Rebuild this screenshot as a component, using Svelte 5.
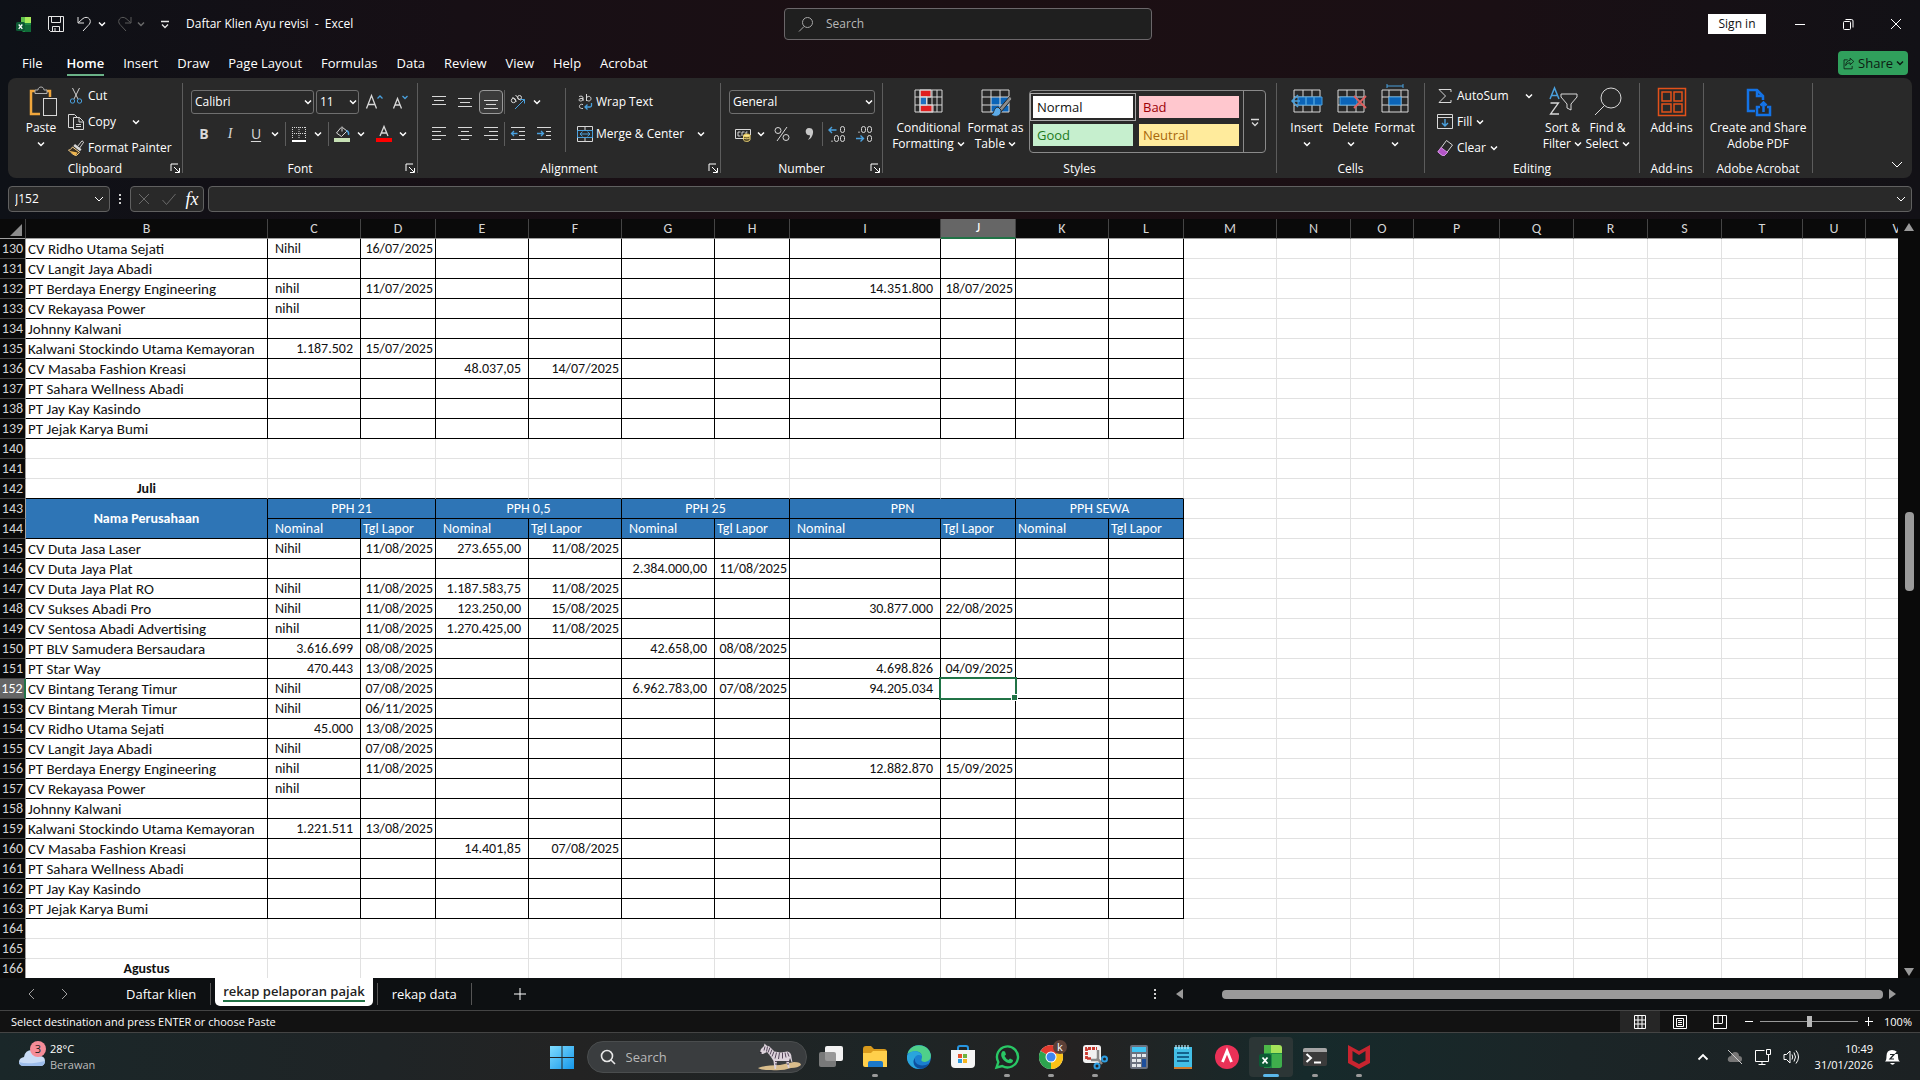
<script>
  const menu = ['File', 'Home', 'Insert', 'Draw', 'Page Layout', 'Formulas', 'Data', 'Review', 'View', 'Help', 'Acrobat'];

  const columns = [
    ['B', 242], ['C', 93], ['D', 75], ['E', 93], ['F', 93], ['G', 93], ['H', 75], ['I', 151], ['J', 75],
    ['K', 93], ['L', 75], ['M', 93], ['N', 74], ['O', 63], ['P', 86], ['Q', 74], ['R', 74], ['S', 74],
    ['T', 81], ['U', 63], ['V', 62]
  ];
  const letters = columns.map((c) => c[0]);
  const tableWidth = columns.reduce((sum, c) => sum + c[1], 26);
  const inner = letters.slice(1, 11);
  const outer = letters.slice(11);

  const cells = {
    130: { B: 'CV Ridho Utama Sejati', C: 'Nihil', D: '16/07/2025' },
    131: { B: 'CV Langit Jaya Abadi' },
    132: { B: 'PT Berdaya Energy Engineering', C: 'nihil', D: '11/07/2025', I: '14.351.800', J: '18/07/2025' },
    133: { B: 'CV Rekayasa Power', C: 'nihil' },
    134: { B: 'Johnny Kalwani' },
    135: { B: 'Kalwani Stockindo Utama Kemayoran', C: '1.187.502', D: '15/07/2025' },
    136: { B: 'CV Masaba Fashion Kreasi', E: '48.037,05', F: '14/07/2025' },
    137: { B: 'PT Sahara Wellness Abadi' },
    138: { B: 'PT Jay Kay Kasindo' },
    139: { B: 'PT Jejak Karya Bumi' },
    142: { B: 'Juli' },
    145: { B: 'CV Duta Jasa Laser', C: 'Nihil', D: '11/08/2025', E: '273.655,00', F: '11/08/2025' },
    146: { B: 'CV Duta Jaya Plat', G: '2.384.000,00', H: '11/08/2025' },
    147: { B: 'CV Duta Jaya Plat RO', C: 'Nihil', D: '11/08/2025', E: '1.187.583,75', F: '11/08/2025' },
    148: { B: 'CV Sukses Abadi Pro', C: 'Nihil', D: '11/08/2025', E: '123.250,00', F: '15/08/2025', I: '30.877.000', J: '22/08/2025' },
    149: { B: 'CV Sentosa Abadi Advertising', C: 'nihil', D: '11/08/2025', E: '1.270.425,00', F: '11/08/2025' },
    150: { B: 'PT BLV Samudera Bersaudara', C: '3.616.699', D: '08/08/2025', G: '42.658,00', H: '08/08/2025' },
    151: { B: 'PT Star Way', C: '470.443', D: '13/08/2025', I: '4.698.826', J: '04/09/2025' },
    152: { B: 'CV Bintang Terang Timur', C: 'Nihil', D: '07/08/2025', G: '6.962.783,00', H: '07/08/2025', I: '94.205.034' },
    153: { B: 'CV Bintang Merah Timur', C: 'Nihil', D: '06/11/2025' },
    154: { B: 'CV Ridho Utama Sejati', C: '45.000', D: '13/08/2025' },
    155: { B: 'CV Langit Jaya Abadi', C: 'Nihil', D: '07/08/2025' },
    156: { B: 'PT Berdaya Energy Engineering', C: 'nihil', D: '11/08/2025', I: '12.882.870', J: '15/09/2025' },
    157: { B: 'CV Rekayasa Power', C: 'nihil' },
    158: { B: 'Johnny Kalwani' },
    159: { B: 'Kalwani Stockindo Utama Kemayoran', C: '1.221.511', D: '13/08/2025' },
    160: { B: 'CV Masaba Fashion Kreasi', E: '14.401,85', F: '07/08/2025' },
    161: { B: 'PT Sahara Wellness Abadi' },
    162: { B: 'PT Jay Kay Kasindo' },
    163: { B: 'PT Jejak Karya Bumi' },
    166: { B: 'Agustus' }
  };
  const rows = Array.from({ length: 37 }, (_, i) => 130 + i);
  const groups = ['PPH 21', 'PPH 0,5', 'PPH 25', 'PPN', 'PPH SEWA'];

  let selected = $state('J152');
  let zoom = $state(100);

  const isBoxed = (row, col) => col <= 'L' && (row <= 139 || (row >= 143 && row <= 163));

  function cellClass(row, col) {
    const list = [];
    const value = cells[row]?.[col] ?? '';
    if (isBoxed(row, col)) list.push('boxed');
    if (row === 142 && col <= 'L') list.push('above');
    if (col === 'B' && (row === 142 || row === 166)) list.push('month');
    else if (col === 'B') list.push('company');
    else if (value.includes('/')) list.push('date');
    else if (/^\d/.test(value)) list.push('number');
    else list.push('word');
    return list.join(' ');
  }

  // inner markup of the small pictures, keyed by command
  const art = {
    excel: '<path d="M5 1h7v7H5z" fill="#5fc24c"/><path d="M9 1h6v6H9z" fill="#a8ea5b"/><path d="M5 7h10v9H7l-2-2z" fill="#1c8a45"/><path d="M9 9h6v7H9z" fill="#0f6a37"/><rect y="6" width="9" height="9" rx="1.5" fill="#0d5a34"/><path d="M2.700 8.500l3.600 4.400M6.300 8.500l-3.600 4.400" stroke="#fff" stroke-width="1.300"/>',
    save: '<path d="M.5.5h15v15h-13l-2-2zM3.500.5v6h9v-6M4.500 15.500v-5h7v5M7 15v-3"/>',
    undo: '<path d="M1 1v6h6M1.300 6.700L6 2.500C10-.5 14.500 3 13 7c-.4 1-1 1.600-1.800 2.400L6 15"/>',
    redo: '<path d="M15 1v6H9M14.700 6.700L10 2.500C6-.5 1.500 3 3 7c.4 1 1 1.600 1.800 2.400L10 15"/>',
    more: '<path d="M4 5.500h8M5 8.500l3 3 3-3" stroke-width="1.300"/>',
    search: '<circle cx="9.500" cy="6.500" r="5"/><path d="M6 10.500L1 15.500"/>',
    min: '<path d="M3 8.500h10"/>',
    restore: '<rect x="3.500" y="5.500" width="7" height="8" rx="1"/><path d="M5.500 3.500h6a1.500 1.500 0 0 1 1.500 1.500v6.500"/>',
    close: '<path d="M3 3l10 10M13 3L3 13"/>',
    share: '<path d="M7 3.500H2.500v11h10V11M10 1.500l4.500 4-4.500 4v-2.300C8 7.200 6 8 4.500 10.500 4.700 6.700 7 4.200 10 4z"/>',
    cut: '<path d="M4.500 0L10 11M11.500 0L6 11" stroke="#d0d0d0"/><circle cx="4.500" cy="13" r="2.200" stroke="#4aa0dd"/><circle cx="11.500" cy="13" r="2.200" stroke="#4aa0dd"/>',
    copy: '<path d="M5 13.500H.5v-13h6L9 3"/><path d="M5.500 3.500h6l4 4v8h-10zM11 3.500V8h4.500M8 10.500h5M8 12.500h5"/>',
    painter: '<path d="M9.500 6.500L14 .8l1.700 1.400-4.200 6" stroke="#d0d0d0"/><path d="M7 4l6.500 5.200-1.500 2L5.300 6z" fill="#d8d8d8" stroke="none"/><path d="M4.500 7l7 5.300L8.500 15.500c-3 0-5.500-3-8-5.500 1.500-.3 3-1 4-3z" fill="#3b3020" stroke="#f6d28f"/><path d="M2 11l7.500 1.500-1.500 3c-2.500-.3-4.300-2.500-6-4.500z" fill="#f0b64e" stroke="none"/>',
    fontUp: '<path d="M.5 14.500L5.500 1.500l5 13M2.500 10.500h6" stroke-width="1.300"/><path d="M11.500 4.500L14 2l2.500 2.500" stroke="#4aa0dd" stroke-width="1.300"/>',
    fontDown: '<path d="M1.500 14.500L5.500 4.500l4 10M3 11h5" stroke-width="1.300"/><path d="M10.500 2L13 4.500 15.500 2" stroke="#4aa0dd" stroke-width="1.300"/>',
    borders: '<path d="M1.500 1v12M1 1.500h14M14.500 1v12M8 1v12M1 7.500h14" stroke-dasharray="1 1"/><path d="M1 15h14" stroke="#fff" stroke-width="2"/>',
    fill: '<path d="M8 .5v5M7 1.500L2.500 7l5 3.500L13 5 8.500 1.500"/><path d="M12.500 4.500c2 1 2.500 2.500 2 4.500" stroke="#4aa0dd" stroke-width="1.400"/><path d="M0 12h16v4H0z" fill="#c6e0b4" stroke="none"/>',
    fontColor: '<path d="M4 10L8 .5 12 10M5.500 7h5" stroke-width="1.300"/><path d="M0 12h16v4H0z" fill="#f00" stroke="none"/>',
    top: '<path d="M1 2.500h14M3 6.500h10M1 10.500h14"/>',
    middle: '<path d="M1 4.500h14M3 8.500h10M1 12.500h14"/>',
    bottom: '<path d="M1 6.500h14M3 10.500h10M1 14.500h14"/>',
    left: '<path d="M1 1.500h14M1 5.500h9M1 9.500h14M1 13.500h9"/>',
    center: '<path d="M1 1.500h14M4 5.500h8M1 9.500h14M4 13.500h8"/>',
    right: '<path d="M1 1.500h14M6 5.500h9M1 9.500h14M6 13.500h9"/>',
    orient: '<circle cx="3.500" cy="6.500" r="2.200"/><path d="M2.500 3l4 4.500M5.500 1l5 5.500"/><circle cx="9.500" cy="3.500" r="2"/><path d="M5 15L14.500 5.500M10.500 5.500h4v4" stroke="#4aa0dd"/>',
    outdent: '<path d="M1 1.500h14M9 5.500h6M9 9.500h6M1 13.500h14"/><path d="M7.500 7.500h-6M4 5L1.500 7.500 4 10" stroke="#4aa0dd" stroke-width="1.300"/>',
    indent: '<path d="M1 1.500h14M10 5.500h5M10 9.500h5M1 13.500h14"/><path d="M1 7.500h6.500M5 5l2.500 2.500L5 10" stroke="#4aa0dd" stroke-width="1.300"/>',
    wrap: '<path d="M2 2.500c3-1 4 0 4 1.500v3M6 4.500c-5-.5-5 2.500-2.500 2.500C5 7 6 6 6 5M9.500 0v7M9.500 4c1-2.500 4.500-2 4.500.7 0 2.600-3.500 3.100-4.500.8M6 10.500c-4-1.500-5.500 4.500 0 4"/><path d="M14.500 9v2.500c0 1-.5 1.500-1.500 1.500H8M10.500 10.500L8 13l2.500 2.500" stroke="#4aa0dd" stroke-width="1.300"/>',
    merge: '<path d="M.5.5h15v15H.5zM8 0v4M8 12v4"/><path d="M.5 4.500h15v7H.5zM3 8h10M5.500 5.700L3 8l2.500 2.300M10.500 5.700L13 8l-2.500 2.300" stroke="#4aa0dd"/>',
    accounting: '<path d="M8 12.500H.5v-9h15V9M5.500 6H3v4h2.500M9.500 6H7v4M12.500 6H11v2"/><path d="M8.500 9.500v4c0 2.500 6.500 2.500 6.500 0v-4" fill="#4a4020" stroke="#f0d77a"/><path d="M8.500 11.700c1 1.500 5.500 1.500 6.500 0" stroke="#f0d77a"/><ellipse cx="11.750" cy="9.500" rx="3.250" ry="1.500" fill="#f6e391" stroke="#e7c75a"/>',
    percent: '<circle cx="4" cy="4.500" r="3"/><circle cx="12" cy="11.500" r="3"/><path d="M13 1L3 15"/>',
    comma: '<path d="M8 2c4.200 0 4.700 3.500 3.700 6.500-.9 2.700-2.200 4.500-4.700 5.500 1.500-2 2.200-3 1.900-4.700C4 10 3 2 8 2z" fill="#c8c8c8" stroke="none"/>',
    moreDec: '<path d="M7.500 4H0M3 1L0 4l3 3" stroke="#4aa0dd" stroke-width="1.400"/><rect x="11.500" y=".5" width="4" height="6" rx="2"/><rect x="5.500" y="9.500" width="4" height="6" rx="2"/><rect x="11.500" y="9.500" width="4" height="6" rx="2"/><path d="M3 16v-1.500"/>',
    lessDec: '<path d="M0 12.500h7.500M4.500 9.500l3 3-3 3" stroke="#4aa0dd" stroke-width="1.400"/><rect x="5.500" y=".5" width="4" height="6" rx="2"/><rect x="11.500" y=".5" width="4" height="6" rx="2"/><rect x="11.500" y="9.500" width="4" height="6" rx="2"/><path d="M3 7V5.500"/>',
    sum: '<path d="M14 4V1.500H2L8.500 8 2 14.500h12V12"/>',
    fillDown: '<path d="M.5.5h15v14H.5zM.5 3.500h15"/><path d="M8 5v7M5 9l3 3 3-3" stroke="#4aa0dd" stroke-width="1.400"/>',
    clear: '<path d="M9.500.5l6 4.500-8 10.500h-2L1 12z" stroke="#d8d8d8"/><path d="M4 7.500l6.500 5-3 3h-2L.8 12z" fill="#b455c8" stroke="#d38ae2"/>',
    tick: '<path d="M1.500 9l4 4.500L14.500 3"/>',
    launcher: '<path d="M1 8V1h7M4 4l5 5M9.500 5v4.500H5"/>',
    normalView: '<path d="M2.500 1.500h11v13h-11zM6 1.500v13M10 1.500v13M2.500 6h11M2.500 10h11"/>',
    pageView: '<path d="M1.500 1.500h13v13h-13zM4.500 4.500h7v8h-7zM6 6.500h4M6 8.500h4M6 10.500h4"/>',
    breakView: '<path d="M1.500 1.500h13v13h-13zM6 2v7M10.500 2v7M1.500 9.500h9"/>'
  };

  // 30px drawings of the tall ribbon buttons
  const bigArt = {
    paste: '<path d="M14 27H5V4h4M20 4h4v6" stroke="#f0a63c" stroke-width="2.500"/><path d="M9 6.500V3h3c0-4 6-4 6 0h3v3.500z" fill="#292929" stroke="#b0b0b0"/><rect x="17.500" y="11.500" width="13" height="17" fill="#292929" stroke="#d8d8d8"/>',
    conditional: '<path d="M6 3h11v7H6zM6 18h13v7H6z" fill="#e02020"/><path d="M6 10h7v8H6z" fill="#1e70bf"/><path d="M1 3h27v22H1zM6 3v22M12.500 10v8M18 3v22M23 3v22M1 10h27M1 18h27"/>',
    table: '<path d="M10 10h18v15H10z" fill="#0b64b8" stroke="none"/><path d="M1 3h27v22H1zM10 3v22M19 3v22M1 10h27M1 18h27"/><path d="M29 9L18 22l2 3 11-13z" fill="#8c8c8c" stroke="#292929"/><path d="M17 20c-5 1-3 6-7 8 5 3 11 1 10-5z" fill="#5cabe8" stroke="#292929"/>',
    insert: '<path d="M2 3h26v22H2zM2 10h26M2 18h26M11 3v22M20 3v22"/><path d="M6 10h24v8H6z" fill="#0b64b8" stroke="#4aa0dd"/><path d="M8 14H1M6 8l-6 6 6 6M14 10v8M22 10v8" stroke="#4aa0dd" stroke-width="1.500"/>',
    delete: '<path d="M2 3h26v22H2zM2 10h26M2 18h26M11 3v22M20 3v22"/><path d="M4 10h17v8H4z" fill="#0b64b8" stroke="#4aa0dd"/><path d="M18 9l12 12M30 9L18 21" stroke="#e06060" stroke-width="1.800"/>',
    format: '<path d="M2 3h26v22H2zM2 10h26M2 18h26M9 3v22M21 3v22"/><path d="M9 10h12v8H9z" fill="#0b64b8" stroke="#4aa0dd"/><path d="M7-1h16M7-3v4M23-3v4" stroke="#4aa0dd"/>',
    sort: '<path d="M2 12L6.500 1l4.500 11M3.500 8.500h6" stroke="#4aa0dd" stroke-width="1.500"/><path d="M2.500 16h8l-8 11h8.500" stroke-width="1.300"/><path d="M13 7h16v3l-6 7v6l-4-2v-4l-6-7z"/>',
    find: '<circle cx="18" cy="11" r="10"/><path d="M11.500 18.500L2 28"/>',
    addins: '<path d="M1.500 1.500h27v27h-27zM5 5h9v9H5zM17 5h8v9h-8zM5 17h9v8H5zM17 17h8v8h-8z" stroke="#e2511a" stroke-width="1.500"/>',
    pdf: '<path d="M12 24H5V3h9l6 6v4M14 3v6h6" stroke="#1473e6" stroke-width="2.500"/><path d="M17 20h-3v8h13v-8h-3M20.500 25v-9M17.500 18.500l3-3 3 3" stroke="#1473e6" stroke-width="2.500"/>'
  };

  // taskbar pictures on a 24px canvas
  const apps = [
    { name: 'Task view', svg: '<rect x="6" y="1" width="18" height="15" rx="2" fill="#f2f2f2"/><rect x="0" y="7" width="17" height="15" rx="2" fill="#888" fill-opacity=".85"/>' },
    { name: 'File Explorer', run: true, svg: '<path d="M0 4q0-3 3-3h5l3 3h10q3 0 3 3v4H0z" fill="#d99a1c"/><path d="M0 8l8 0 2-2h14v16H2q-2 0-2-2z" fill="#ffcf4b"/><path d="M5 22v-4q0-2 2-2h11q2 0 2 2v4z" fill="#1c78c8"/>' },
    { name: 'Microsoft Edge', svg: '<circle cx="12" cy="12" r="12" fill="#1b7fd0"/><path d="M.5 9C3-2 20-3 23.700 9c1.300 6-4 9-8.200 7.500-2-1-.5-2.500-.5-5C15 6 6 4.500.5 9z" fill="#4fd08a"/><path d="M0 11c4-7 13-5.500 15 0-4-2.500-8 0-7.500 4.500.5 4 4 7 8 7.500C7 26-1 19 0 11z" fill="#2aa5dc"/><path d="M8 13c-1.500 6 6 10 14.500 5.500-3 4.500-8 6.500-12 4.500-4.500-2-5-8-2.500-10z" fill="#0d4f9e"/>' },
    { name: 'Microsoft Store', svg: '<path d="M7 7V3q0-2 2-2h6q2 0 2 2v4" fill="none" stroke="#2795e0" stroke-width="2"/><path d="M0 5h24v14q0 4-4 4H4q-4 0-4-4z" fill="#f5f5f5"/><path d="M7 9h4v4H7z" fill="#e8502a"/><path d="M12 9h4v4h-4z" fill="#6db33f"/><path d="M7 14h4v4H7z" fill="#2a9be0"/><path d="M12 14h4v4h-4z" fill="#f5b51e"/>' },
    { name: 'WhatsApp', run: true, svg: '<path d="M1.500 22.500l1.800-5.500A10.500 10.500 0 1 1 7.200 21z" fill="none" stroke="#29c765" stroke-width="2.400"/><path d="M8 6l2 .5 1 3-1.500 1.500q1.500 3 4 4L15 13.500l3 1.500c0 5-6 3.500-9 .5S5 8 8 6z" fill="#29c765"/>' },
    { name: 'Google Chrome', run: true, svg: '<circle cx="12" cy="12" r="12" fill="#fff"/><path d="M12 12L1.600 6A12 12 0 0 1 22.400 6z" fill="#e33b2e"/><path d="M12 12l10.400-6A12 12 0 0 1 12 24z" fill="#fbc116"/><path d="M12 12l0 12A12 12 0 0 1 1.600 6z" fill="#2da44e"/><circle cx="12" cy="12" r="5.500" fill="#fff"/><circle cx="12" cy="12" r="4.500" fill="#3f85ee"/><circle cx="21" cy="2" r="7" fill="#5d4037"/><text x="21" y="6" fill="#fff" font-size="11" text-anchor="middle">k</text>' },
    { name: 'Snipping Tool', run: true, svg: '<rect x="0" y="0" width="18" height="18" rx="3" fill="#f1f1f1"/><path d="M3.500 14V3.500H14" fill="none" stroke="#c8372d" stroke-width="2.800" stroke-dasharray="3 1"/><path d="M4 13.500h4" stroke="#c8372d" stroke-width="2.500"/><path d="M15 5v10l-7 0M14 13l5 6" fill="none" stroke="#888" stroke-width="2.500"/><circle cx="21.500" cy="14" r="2.500" fill="none" stroke="#2e9ee2" stroke-width="2"/><circle cx="14" cy="21" r="2.500" fill="none" stroke="#2e9ee2" stroke-width="2"/>' },
    { name: 'Calculator', svg: '<rect x="3" y="0" width="18" height="24" rx="2" fill="#6b7280"/><path d="M5 2h14v5H5z" fill="#40c4f2"/><path d="M5 9h4v3H5zM10 9h4v3h-4zM15 9h4v3h-4zM5 14h4v3H5zM10 14h4v3h-4zM5 19h4v3H5zM10 19h4v3h-4z" fill="#e4e8ec"/><path d="M15 14h4v8h-4z" fill="#1e4f9c"/>' },
    { name: 'Notepad', svg: '<path d="M3 21h18v3H3z" fill="#d07a2c"/><path d="M3 2h18v20H3z" fill="#43bfe6"/><path d="M5 0v4M8 0v4M11 0v4M14 0v4M17 0v4" stroke="#bfefff" stroke-width="1.200"/><path d="M6 8h12M6 12h12M6 16h12" stroke="#14628c" stroke-width="1.800"/>' },
    { name: 'Accurate', svg: '<circle cx="12" cy="12" r="12" fill="#ea3157"/><path d="M7.500 17L12 6l4.500 11" fill="none" stroke="#fff" stroke-width="2.800"/>' },
    { name: 'Excel', run: true, active: true, svg: '<path d="M5 0h10v12H5z" fill="#4db848"/><path d="M12 0h8q3 0 3 3v9H12z" fill="#a5e35a"/><path d="M5 8h18v12q0 3-3 3H5z" fill="#1f8b46"/><path d="M13 9h10v11q0 3-3 3h-7z" fill="#3fae4c"/><rect x="0" y="9" width="12" height="13" rx="2" fill="#0c5a34"/><path d="M3.500 12.500l5 6M8.500 12.500l-5 6" stroke="#fff" stroke-width="1.800"/>' },
    { name: 'Terminal', run: true, svg: '<rect x="0" y="3" width="24" height="18" rx="2" fill="#3b3b3b"/><path d="M0 5q0-2 2-2h20q2 0 2 2v2H0z" fill="#a5a5a5"/><path d="M3.500 9l4.500 4-4.500 4M11 17.500h7" fill="none" stroke="#fff" stroke-width="2"/>' },
    { name: 'McAfee', run: true, svg: '<path d="M1 0l11 6 11-6v18l-11 6L1 18zM5.500 6v9.500l6.500 3.500 6.500-3.500V6L12 10z" fill="#c8242f" fill-rule="evenodd"/>' }
  ];

  const styleCells = ['Normal', 'Bad', 'Good', 'Neutral'];
</script>

{#snippet icon(name)}
  <svg class="icon" viewBox="0 0 16 16" width="16" height="16" aria-hidden="true">{@html art[name]}</svg>
{/snippet}

{#snippet big(name)}
  <svg class="big-icon" viewBox="0 0 30 30" width="30" height="30" aria-hidden="true">{@html bigArt[name]}</svg>
{/snippet}

{#snippet chev()}
  <svg class="chev" viewBox="0 0 8 8" width="8" height="8" aria-hidden="true"><path d="M1 2.500l3 3 3-3" /></svg>
{/snippet}

{#snippet tool(name, label)}
  <button class="tool" aria-label={label}>{@render icon(name)}</button>
{/snippet}

{#snippet drop(label)}
  <button class="drop" aria-label={label}>{@render chev()}</button>
{/snippet}

{#snippet footer(label, launcher)}
  <div class="group-foot">
    <span>{label}</span>
    {#if launcher}
      <button class="launcher" aria-label="{label} settings">
        <svg viewBox="0 0 10 10" width="10" height="10">{@html art.launcher}</svg>
      </button>
    {/if}
  </div>
{/snippet}

<div class="app">
  <header class="titlebar">
    <div class="quick">
      {@render icon('excel')}
      <button aria-label="Save">{@render icon('save')}</button>
      <button class="pair" aria-label="Undo">{@render icon('undo')}{@render chev()}</button>
      <button class="pair dim" aria-label="Redo">{@render icon('redo')}{@render chev()}</button>
      <button aria-label="Customize quick access">{@render icon('more')}</button>
      <span class="doc">Daftar Klien Ayu revisi &nbsp;-&nbsp; Excel</span>
    </div>
    <label class="search">
      {@render icon('search')}
      <input type="search" placeholder="Search" aria-label="Search" />
    </label>
    <div class="window">
      <button class="signin">Sign in</button>
      <button class="win" aria-label="Minimize">{@render icon('min')}</button>
      <button class="win" aria-label="Restore">{@render icon('restore')}</button>
      <button class="win" aria-label="Close">{@render icon('close')}</button>
    </div>
  </header>

  <nav class="menu">
    {#each menu as item}
      <button class:current={item === 'Home'}>{item}</button>
    {/each}
    <button class="share">{@render icon('share')}Share{@render chev()}</button>
  </nav>

  <section class="ribbon">
    <div class="group clipboard">
      <div class="tools">
        <button class="tall">{@render big('paste')}<span>Paste</span>{@render chev()}</button>
        <div class="stack">
          <button class="row">{@render icon('cut')}Cut</button>
          <button class="row copy">{@render icon('copy')}Copy{@render chev()}</button>
          <button class="row">{@render icon('painter')}Format Painter</button>
        </div>
      </div>
      {@render footer('Clipboard', true)}
    </div>

    <div class="group font">
      <div class="lines">
        <div class="line boxes">
          <span class="select"><select aria-label="Font"><option>Calibri</option></select>{@render chev()}</span>
          <span class="select size"><select aria-label="Font size"><option>11</option></select>{@render chev()}</span>
          {@render tool('fontUp', 'Increase font size')}
          {@render tool('fontDown', 'Decrease font size')}
        </div>
        <div class="line marks">
          <button class="tool bold">B</button>
          <button class="tool italic">I</button>
          <button class="tool under">U</button>
          {@render drop('Underline style')}
          <i class="bar"></i>
          {@render tool('borders', 'Borders')}
          {@render drop('Border style')}
          <i class="bar"></i>
          {@render tool('fill', 'Fill color')}
          {@render drop('Pick fill color')}
          {@render tool('fontColor', 'Font color')}
          {@render drop('Pick font color')}
        </div>
      </div>
      {@render footer('Font', true)}
    </div>

    <div class="group alignment">
      <div class="tools">
        <div class="lines">
          <div class="line">
            {@render tool('top', 'Top align')}
            {@render tool('middle', 'Middle align')}
            <button class="tool pressed" aria-label="Bottom align">{@render icon('bottom')}</button>
            <i class="bar"></i>
            {@render tool('orient', 'Orientation')}
            {@render drop('Orientation options')}
          </div>
          <div class="line">
            {@render tool('left', 'Align left')}
            {@render tool('center', 'Center')}
            {@render tool('right', 'Align right')}
            <i class="bar"></i>
            {@render tool('outdent', 'Decrease indent')}
            {@render tool('indent', 'Increase indent')}
          </div>
        </div>
        <i class="bar long"></i>
        <div class="lines">
          <button class="row">{@render icon('wrap')}Wrap Text</button>
          <button class="row merge">{@render icon('merge')}Merge &amp; Center{@render chev()}</button>
        </div>
      </div>
      {@render footer('Alignment', true)}
    </div>

    <div class="group numbers">
      <div class="lines">
        <span class="select"><select aria-label="Number format"><option>General</option></select>{@render chev()}</span>
        <div class="line">
          {@render tool('accounting', 'Accounting format')}
          {@render drop('Currency')}
          {@render tool('percent', 'Percent style')}
          {@render tool('comma', 'Comma style')}
          <i class="bar"></i>
          {@render tool('moreDec', 'Increase decimal')}
          {@render tool('lessDec', 'Decrease decimal')}
        </div>
      </div>
      {@render footer('Number', true)}
    </div>

    <div class="group styles">
      <div class="tools">
        <button class="tall">{@render big('conditional')}<span>Conditional<br />Formatting {@render chev()}</span></button>
        <button class="tall">{@render big('table')}<span>Format as<br />Table {@render chev()}</span></button>
        <div class="gallery">
          <div class="swatches">
            {#each styleCells as name}
              <button class={name.toLowerCase()}>{name}</button>
            {/each}
          </div>
          <button class="gallery-more" aria-label="More styles">{@render icon('more')}</button>
        </div>
      </div>
      {@render footer('Styles', false)}
    </div>

    <div class="group sheetcells">
      <div class="tools">
        <button class="tall">{@render big('insert')}<span>Insert</span>{@render chev()}</button>
        <button class="tall">{@render big('delete')}<span>Delete</span>{@render chev()}</button>
        <button class="tall">{@render big('format')}<span>Format</span>{@render chev()}</button>
      </div>
      {@render footer('Cells', false)}
    </div>

    <div class="group editing">
      <div class="tools">
        <div class="stack">
          <button class="row copy">{@render icon('sum')}AutoSum{@render chev()}</button>
          <button class="row">{@render icon('fillDown')}Fill{@render chev()}</button>
          <button class="row">{@render icon('clear')}Clear{@render chev()}</button>
        </div>
        <button class="tall">{@render big('sort')}<span>Sort &amp;<br />Filter {@render chev()}</span></button>
        <button class="tall">{@render big('find')}<span>Find &amp;<br />Select {@render chev()}</span></button>
      </div>
      {@render footer('Editing', false)}
    </div>

    <div class="group addins">
      <div class="tools">
        <button class="tall">{@render big('addins')}<span>Add-ins</span></button>
      </div>
      {@render footer('Add-ins', false)}
    </div>

    <div class="group acrobat">
      <div class="tools">
        <button class="tall">{@render big('pdf')}<span>Create and Share<br />Adobe PDF</span></button>
      </div>
      {@render footer('Adobe Acrobat', false)}
    </div>

    <button class="collapse" aria-label="Collapse ribbon">
      <svg viewBox="0 0 12 12" width="12" height="12"><path d="M1 4l5 5 5-5" /></svg>
    </button>
  </section>

  <section class="formula">
    <div class="namebox">
      <input aria-label="Name box" bind:value={selected} />
      <svg viewBox="0 0 12 12" width="12" height="12"><path d="M2 4l4 4 4-4" /></svg>
    </div>
    <span class="dots"></span>
    <div class="fx">
      <button class="dim" aria-label="Cancel">{@render icon('close')}</button>
      <button class="dim" aria-label="Enter">{@render icon('tick')}</button>
      <button class="fn" aria-label="Insert function">fx</button>
    </div>
    <div class="entry">
      <input aria-label="Formula bar" />
      <svg viewBox="0 0 12 12" width="12" height="12"><path d="M2 4l4 4 4-4" /></svg>
    </div>
  </section>

  <main class="sheet">
    <div class="viewport">
      <table style="width: {tableWidth}px">
        <colgroup>
          <col class="index" />
          {#each columns as [, width]}
            <col style="width: {width}px" />
          {/each}
        </colgroup>
        <thead>
          <tr>
            <th class="corner" aria-label="Select all">
              <svg viewBox="0 0 12 12" width="12" height="12"><path d="M12 0v12H0z" /></svg>
            </th>
            {#each letters as letter}
              <th class:picked={letter === 'J'}>{letter}</th>
            {/each}
          </tr>
        </thead>
        <tbody>
          {#each rows as row}
            <tr>
              <th class:picked={row === 152}>{row}</th>
              {#if row === 143}
                <td class="banner name" rowspan="2">Nama Perusahaan</td>
                {#each groups as group}
                  <td class="banner mid" colspan="2">{group}</td>
                {/each}
                {#each outer as col}<td></td>{/each}
              {:else if row === 144}
                {#each inner as col, i}
                  <td class="banner" class:inset={i % 2 === 0 && col !== 'K'}>{i % 2 ? 'Tgl Lapor' : 'Nominal'}</td>
                {/each}
                {#each outer as col}<td></td>{/each}
              {:else}
                {#each letters as col}
                  <td class={cellClass(row, col)}>
                    {cells[row]?.[col] ?? ''}
                    {#if row === 152 && col === 'J'}<span class="cursor"></span>{/if}
                  </td>
                {/each}
              {/if}
            </tr>
          {/each}
        </tbody>
      </table>
    </div>
    <div class="vscroll">
      <svg viewBox="0 0 10 8" width="10" height="8"><path d="M5 0l5 8H0z" /></svg>
      <span class="track"><span class="thumb"></span></span>
      <svg viewBox="0 0 10 8" width="10" height="8"><path d="M5 8l5-8H0z" /></svg>
    </div>
  </main>

  <section class="tabs">
    <button class="arrow" aria-label="Previous sheet"><svg viewBox="0 0 12 12" width="12" height="12"><path d="M8 1L3 6l5 5" /></svg></button>
    <button class="arrow" aria-label="Next sheet"><svg viewBox="0 0 12 12" width="12" height="12"><path d="M4 1l5 5-5 5" /></svg></button>
    <button class="tab first">Daftar klien</button>
    <button class="tab open"><span>rekap pelaporan pajak</span></button>
    <button class="tab last">rekap data</button>
    <button class="add" aria-label="New sheet"><svg viewBox="0 0 12 12" width="12" height="12"><path d="M6 0v12M0 6h12" /></svg></button>
    <div class="hscroll">
      <span class="dots"></span>
      <svg viewBox="0 0 8 10" width="8" height="10"><path d="M0 5l7-5v10z" /></svg>
      <span class="track"><span class="thumb"></span></span>
      <svg viewBox="0 0 8 10" width="8" height="10"><path d="M8 5L1 0v10z" /></svg>
    </div>
  </section>

  <footer class="status">
    <span>Select destination and press ENTER or choose Paste</span>
    <div class="views">
      <button class="on" aria-label="Normal">{@render icon('normalView')}</button>
      <button aria-label="Page layout">{@render icon('pageView')}</button>
      <button aria-label="Page break preview">{@render icon('breakView')}</button>
      <button class="step" aria-label="Zoom out"><svg viewBox="0 0 10 10" width="10" height="10"><path d="M1 4.500h8" /></svg></button>
      <input type="range" min="0" max="200" aria-label="Zoom" bind:value={zoom} />
      <button class="step" aria-label="Zoom in"><svg viewBox="0 0 10 10" width="10" height="10"><path d="M1 4.500h8M4.500 0v9" /></svg></button>
      <span class="percent">{zoom}%</span>
    </div>
  </footer>

  <div class="taskbar">
    <div class="weather">
      <svg viewBox="0 0 28 28" width="28" height="28">
        <path d="M6 25q-5 0-5-4 0-4 5-5 1-7 8-7 6 0 7 6 6 0 6 5 0 5-5 5z" fill="#c9dcf6" />
        <path d="M6 25q-5 0-5-4 9 3 26-1 0 5-5 5z" fill="#9dbdeb" />
        <circle cx="20" cy="8" r="8" fill="#f58c98" />
        <text x="20" y="12" text-anchor="middle" font-size="11" fill="#222">3</text>
      </svg>
      <p>28°C<br /><span>Berawan</span></p>
    </div>
    <div class="dock">
      <button class="app-btn" aria-label="Start">
        <svg viewBox="0 0 24 24" width="24" height="24">
          <defs>
            <linearGradient id="win" x1="0" y1="0" x2="1" y2="1"><stop offset="0" stop-color="#7fdcff" /><stop offset="1" stop-color="#1597ea" /></linearGradient>
          </defs>
          <path d="M0 1h11.500v11H0zM12.500 1H24v11H12.500zM0 13h11.500v11H0zM12.500 13H24v11H12.500z" fill="url(#win)" />
        </svg>
      </button>
      <label class="find">
        <svg class="glass" viewBox="0 0 16 16" width="16" height="16"><circle cx="7" cy="7" r="5.500" /><path d="M11 11l4 4" /></svg>
        <input type="search" placeholder="Search" aria-label="Search Windows" />
        <svg class="zebra" viewBox="0 0 46 28" width="46" height="28">
          <path d="M2 25q8-3 22-3l14-3q7 0 7 3-3 3-10 3-8 3-20 2-11 0-13-2z" fill="#d9bd8c" />
          <path d="M4 9l1-3 3-3 .5-2.500 2 2 3 1 5 5 6 1 7-1q4 1 4 6l1 5-1-.5-1.500-4-1 3 .5 7h-1.500l-2-7h-9l-1 8h-1.500l-1-8-2.500-4-4-5-4 2q-3 .5-3-2z" fill="#ddd3dc" />
          <path d="M9 3.500l-1 4M11.500 3.500l-1 5M14 4.500l-2 5M16 6.500l-2 5M18 8.500l-2 5M20.500 9.500l-1.500 6M23.500 9.500l-1 6.500M26.500 9.500v6M29 9.500l1 5M31.500 9.500l1.500 4M19 18.500h2M19 21h2M30 18.500h3M31 21h2" stroke="#54465a" />
          <path d="M4 9l1.500 1.500" stroke="#2b2430" stroke-width="1.500" />
        </svg>
      </label>
      {#each apps as item}
        <button class="app-btn" class:active={item.active} class:run={item.run} aria-label={item.name}>
          <svg viewBox="0 0 24 24" width="24" height="24">{@html item.svg}</svg>
        </button>
      {/each}
    </div>
    <div class="tray">
      <svg class="up" viewBox="0 0 16 16" width="16" height="16"><path d="M3.500 10.500L8 6l4.500 4.500" stroke-width="1.800" /></svg>
      <svg viewBox="0 0 16 16" width="16" height="16"><path d="M3 13q-3-1-2-4 1-2 3-2 1-4 4-4 4 0 4 4 3 0 3 3t-3 3z" fill="#777" stroke="none" /><path d="M1 1l14 14" stroke="#ccc" /></svg>
      <svg viewBox="0 0 16 16" width="16" height="16"><path d="M9.500 1.500h-9v11h13V9M3.500 15.500h7M7 12.500v3M11.500.5h4v5h-4zM13.500 6v4" /></svg>
      <svg viewBox="0 0 16 16" width="16" height="16"><path d="M1 5.500h2.500L7 2v12l-3.500-3.500H1zM9 5.500q1.500 2.500 0 5M11 3.500q3 4.500 0 9M13 1.500q5 6.500 0 13" /></svg>
      <p>10:49<br />31/01/2026</p>
      <svg viewBox="0 0 16 16" width="16" height="16"><path d="M0 12.500q1.500-1 1.500-5.500 0-6 5.500-6 6 0 6 6 0 4.500 2 5.500zM5 14h5q-2.500 3.500-5 0z" fill="#fff" stroke="none" /><path d="M5 5.500h4L5 10h4M11 .5h4l-4 4h4" stroke="#1c2326" stroke-width="1.200" /></svg>
    </div>
  </div>
</div>

<style>
  :global(body) {
    margin: 0;
    background: #111;
  }

  .app {
    display: flex;
    flex-direction: column;
    height: 100vh;
    overflow: hidden;
    color: #fff;
    font: 12px/16px 'Segoe UI', 'Open Sans', sans-serif;
    background: linear-gradient(90deg, #0e1117 0, #170f15 24%, #1c0f13 50%, #1a0f14 78%, #121116 100%);
  }

  button {
    display: inline-flex;
    align-items: center;
    justify-content: center;
    padding: 0;
    border: 0;
    background: none;
    color: inherit;
    font: inherit;
    white-space: nowrap;
  }

  input,
  select {
    box-sizing: border-box;
    min-width: 0;
    padding: 0;
    border: 0;
    outline: 0;
    background: none;
    color: inherit;
    font: inherit;
    appearance: none;
  }

  svg {
    display: block;
    flex: none;
    overflow: visible;
    fill: none;
    stroke: currentColor;
  }

  .icon {
    color: #d8d8d8;
  }

  .chev {
    stroke-width: 1.5;
  }

  .dim,
  .dim .icon {
    color: #6a6a6a;
  }

  /* title bar */
  .titlebar {
    display: grid;
    grid-template-columns: 1fr 368px 1fr;
    align-items: start;
    height: 48px;
    padding-left: 16px;
  }

  .quick {
    display: flex;
    align-items: center;
    height: 48px;
    gap: 13px;
  }

  .quick > .icon {
    margin-right: 3px;
    stroke: none;
  }

  .quick button .icon {
    color: #e6e6e6;
  }

  .quick .dim .icon {
    color: #5a5a5a;
  }

  .pair {
    gap: 5px;
    width: 28px;
  }

  .pair + .pair {
    margin-left: -2px;
  }

  .doc {
    white-space: nowrap;
  }

  .search {
    display: flex;
    align-items: center;
    gap: 12px;
    height: 30px;
    margin-top: 8px;
    padding: 0 13px;
    border: 1px solid #6b676a;
    border-radius: 4px;
    background: #1f1f1f;
  }

  .search .icon {
    color: #a8a8a8;
  }

  .search input {
    flex: 1;
  }

  input::placeholder {
    color: #b8b8b8;
    opacity: 1;
  }

  .window {
    display: flex;
    justify-content: flex-end;
    align-items: center;
    height: 48px;
  }

  .signin {
    width: 58px;
    height: 20px;
    margin-right: 10px;
    background: #fff;
    color: #111;
  }

  .win {
    width: 48px;
    height: 32px;
  }

  .win .icon {
    color: #fff;
  }

  /* menu */
  .menu {
    display: flex;
    align-items: center;
    height: 30px;
    padding: 0 12px 0 13px;
    font-size: 13px;
  }

  .menu button {
    height: 26px;
    padding: 0 10px 0 9px;
  }

  .menu button:first-child {
    margin-right: 5px;
  }

  .menu .current {
    font-weight: 600;
    box-shadow: inset 0 -2px #6ab187;
    padding: 0;
    margin: 0 10px 0 9px;
  }

  .menu .share {
    gap: 3px;
    height: 24px;
    margin-left: auto;
    padding: 0 4px;
    border-radius: 4px;
    background: #30a05c;
    color: #0c1a12;
  }

  .share .icon {
    width: 13px;
    height: 13px;
    color: #0c1a12;
  }

  /* ribbon */
  .ribbon {
    display: flex;
    flex: none;
    height: 100px;
    margin: 0 8px;
    border-radius: 8px;
    background: #292929;
  }

  .group {
    display: flex;
    flex-direction: column;
    justify-content: space-between;
    box-sizing: border-box;
    height: 90px;
    margin: 5px 0;
    border-right: 1px solid #5c5c5c;
  }

  .tools {
    display: flex;
    height: 78px;
  }

  .group-foot {
    position: relative;
    height: 16px;
    margin-bottom: -4px;
    text-align: center;
  }

  .launcher {
    position: absolute;
    right: 2px;
    top: 2px;
  }

  .stack {
    display: flex;
    flex-direction: column;
    align-items: flex-start;
  }

  .row {
    height: 26px;
    gap: 4px;
  }

  .copy .chev {
    margin-left: 12px;
  }

  .tall {
    flex-direction: column;
    justify-content: flex-start;
    padding-top: 4px;
  }

  .tall span {
    margin: 3px 0 4px;
  }

  .tall span .chev {
    display: inline-block;
  }

  .big-icon {
    color: #d8d8d8;
  }

  .lines {
    display: flex;
    flex-direction: column;
    align-items: flex-start;
    gap: 8px;
    padding-top: 7px;
  }

  .line {
    display: flex;
    align-items: center;
    height: 24px;
  }

  .lines .row {
    height: 24px;
    gap: 3px;
  }

  .tool {
    width: 26px;
    height: 24px;
  }

  .drop {
    width: 12px;
    height: 24px;
  }

  .bar {
    width: 1px;
    height: 24px;
    background: #5c5c5c;
  }

  .bar.long {
    height: 64px;
    margin: 5px 11px 0 8px;
  }

  .pressed {
    width: 24px;
    margin: 0 1px;
    box-sizing: border-box;
    border: 1px solid #9a9a9a;
    border-radius: 4px;
    background: #3b3b3b;
  }

  .select {
    position: relative;
    display: block;
    height: 24px;
  }

  .select select {
    width: 100%;
    height: 24px;
    padding: 0 3px;
    border: 1px solid #6f6f6f;
    border-radius: 3px;
  }

  .select .chev {
    position: absolute;
    right: 2px;
    top: 8px;
  }

  .clipboard {
    width: 175px;
  }

  .clipboard .tall {
    width: 38px;
    margin: 0 8px 0 14px;
  }

  .font {
    width: 235px;
  }

  .font .lines,
  .numbers .lines {
    padding-left: 8px;
  }

  .font .select {
    width: 123px;
    margin-right: 2px;
  }

  .font .select.size {
    width: 43px;
  }

  .marks .tool {
    color: #d8d8d8;
    font-size: 14px;
  }

  .marks .drop {
    margin-right: 4px;
  }

  .marks .bold {
    font-weight: 700;
  }

  .marks .italic {
    font-family: 'Liberation Serif', serif;
    font-style: italic;
  }

  .marks .under {
    text-decoration: underline;
    text-underline-offset: 2px;
  }

  .alignment {
    width: 303px;
  }

  .alignment .tools > .lines:first-child {
    padding-left: 8px;
  }

  .merge .chev {
    margin-left: 10px;
  }

  .numbers {
    width: 162px;
  }

  .numbers .select {
    width: 146px;
  }

  .numbers .tool {
    width: 27px;
  }

  .numbers .drop {
    width: 10px;
    margin-right: 2px;
  }

  .styles {
    width: 394px;
  }

  .styles .tall {
    width: 67px;
  }

  .styles .tall:first-child {
    margin-left: 12px;
  }

  .gallery {
    display: flex;
    box-sizing: border-box;
    width: 237px;
    height: 63px;
    margin-top: 7px;
    border: 1px solid #8a8a8a;
    border-radius: 4px;
  }

  .swatches {
    display: grid;
    grid-template-columns: 100px 100px;
    grid-auto-rows: 22px;
    gap: 6px;
    padding: 5px 4px 5px 3px;
    font-size: 13px;
  }

  .swatches button {
    justify-content: flex-start;
    padding-left: 4px;
  }

  .swatches .normal {
    background: #fff;
    color: #111;
    outline: 1px solid #aaa;
    outline-offset: 2px;
  }

  .swatches .bad {
    background: #ffc7ce;
    color: #9c0006;
  }

  .swatches .good {
    background: #c6efce;
    color: #1d7a1d;
  }

  .swatches .neutral {
    background: #ffeb9c;
    color: #a8670b;
  }

  .gallery-more {
    flex: 1;
    border-left: 1px solid #8a8a8a;
  }

  .sheetcells {
    width: 148px;
  }

  .sheetcells .tools {
    justify-content: center;
  }

  .sheetcells .tall {
    width: 44px;
  }

  .editing {
    width: 215px;
  }

  .editing .tools {
    padding-left: 12px;
  }

  .editing .stack {
    width: 103px;
  }

  .editing .tall {
    width: 45px;
  }

  .addins {
    width: 64px;
  }

  .acrobat {
    width: 109px;
  }

  .addins .tools,
  .acrobat .tools {
    justify-content: center;
  }

  .collapse {
    align-self: flex-end;
    margin: 0 9px 8px auto;
  }

  /* formula bar */
  .formula {
    display: flex;
    align-items: center;
    flex: none;
    height: 41px;
    box-sizing: border-box;
    padding: 8px 8px 7px;
  }

  .namebox,
  .fx,
  .entry {
    display: flex;
    align-items: center;
    box-sizing: border-box;
    height: 26px;
    border: 1px solid #606060;
    border-radius: 4px;
    background: #292929;
  }

  .namebox {
    width: 102px;
    padding: 0 4px 0 6px;
  }

  .namebox input,
  .entry input {
    flex: 1;
  }

  .dots {
    flex: none;
    width: 2px;
    height: 10px;
    margin: 0 9px;
    background: repeating-linear-gradient(#d0d0d0 0 2px, transparent 2px 4px);
  }

  .fx {
    width: 74px;
    justify-content: space-around;
    margin-right: 4px;
  }

  .fn {
    font: italic 18px/20px 'Liberation Serif', serif;
  }

  .entry {
    flex: 1;
    padding: 0 4px;
  }

  /* sheet */
  .sheet {
    display: flex;
    flex: 1;
    min-height: 0;
    background: #0a0a0a;
  }

  .viewport {
    flex: 1;
    min-width: 0;
    overflow: hidden;
    background: #fff;
  }

  table {
    table-layout: fixed;
    border-collapse: separate;
    border-spacing: 0;
    color: #111;
    font: 14px/18px Calibri, Carlito, Lato, sans-serif;
  }

  .index {
    width: 26px;
  }

  th {
    box-sizing: border-box;
    height: 20px;
    padding: 0;
    border-right: 1px solid #444;
    border-bottom: 1px solid #a0a0a0;
    background: #0a0a0a;
    color: #d6d6d6;
    font-weight: 400;
  }

  tbody th {
    border-right-color: #a0a0a0;
    border-bottom-color: #444;
  }

  .corner svg {
    margin: 3px 0 0 10px;
    fill: #8c8c8c;
    stroke: none;
  }

  th.picked {
    border-bottom: 2px solid #217346;
    background: #666;
    color: #fff;
  }

  tbody th.picked {
    border-bottom: 1px solid #444;
    border-right: 2px solid #217346;
  }

  td {
    box-sizing: border-box;
    height: 20px;
    padding: 0 2px;
    border-right: 1px solid #e1e1e1;
    border-bottom: 1px solid #e1e1e1;
    overflow: visible;
    white-space: nowrap;
    position: relative;
  }

  td.boxed,
  td.banner {
    border-color: #000;
  }

  td.above {
    border-bottom-color: #000;
  }

  td.company {
    font-size: 15px;
  }

  td.number {
    padding: 0 7px;
    text-align: right;
  }

  td.date {
    text-align: right;
  }

  td.word,
  td.inset {
    padding-left: 7px;
  }

  td.month,
  td.name {
    font-weight: 700;
    text-align: center;
  }

  td.banner {
    background: #2e75b6;
    color: #fff;
  }

  td.mid {
    text-align: center;
  }

  .cursor {
    position: absolute;
    inset: -2px -2px -2px -2px;
    z-index: 1;
    border: 2px solid #217346;
  }

  .cursor::after {
    content: '';
    position: absolute;
    right: -3px;
    bottom: -3px;
    width: 5px;
    height: 5px;
    border: 1px solid #fff;
    background: #217346;
  }

  .vscroll {
    display: flex;
    flex-direction: column;
    align-items: center;
    width: 22px;
    padding: 4px 0 2px;
    box-sizing: border-box;
  }

  .vscroll svg,
  .hscroll svg {
    fill: #9a9a9a;
    stroke: none;
  }

  .vscroll .track {
    flex: 1;
    width: 9px;
    padding-top: 281px;
  }

  .vscroll .thumb {
    display: block;
    height: 79px;
    border-radius: 4px;
    background: #9a9a9a;
  }

  /* sheet tabs */
  .tabs {
    display: flex;
    flex: none;
    align-items: center;
    height: 32px;
    padding-left: 16px;
    border-bottom: 1px solid #444;
    background: #0d1012;
    font-size: 13px;
  }

  .arrow {
    width: 32px;
    color: #a0a0a0;
  }

  .tab {
    height: 22px;
    padding: 0 14px;
    border-right: 1px solid #555;
  }

  .tab.first {
    margin-left: 32px;
  }

  .tab.last {
    border-left: 1px solid #555;
  }

  .tab.open {
    align-self: flex-start;
    height: 28px;
    margin: 0 4px;
    padding: 0 8px;
    border: 0;
    border-radius: 0 0 5px 5px;
    background: #fff;
    color: #222;
    font-weight: 600;
  }

  .open span {
    padding-bottom: 1px;
    border-bottom: 2px solid #217346;
  }

  .add {
    margin-left: 42px;
  }

  .hscroll {
    display: flex;
    align-items: center;
    width: 752px;
    margin-left: auto;
    padding-right: 24px;
  }

  .hscroll .dots {
    height: 10px;
    margin: 0 20px 0 10px;
  }

  .hscroll .track {
    flex: 1;
    padding: 0 5px 0 38px;
  }

  .hscroll .thumb {
    display: block;
    height: 9px;
    border-radius: 4px;
    background: #9a9a9a;
  }

  /* status bar */
  .status {
    display: flex;
    flex: none;
    align-items: center;
    justify-content: space-between;
    height: 21px;
    padding: 0 8px 0 11px;
    border-bottom: 1px solid #444;
    background: #121212;
    font-size: 11px;
  }

  .views {
    display: flex;
    align-items: center;
  }

  .views button {
    width: 40px;
    height: 21px;
  }

  .views .on {
    background: #262626;
  }

  .views .step {
    width: 18px;
  }

  .views .icon {
    color: #fff;
  }

  .views input {
    width: 98px;
    height: 16px;
    margin: 0 2px;
    background: linear-gradient(#999, #999) center / 100% 1px no-repeat;
  }

  .views input::-webkit-slider-thumb {
    width: 5px;
    height: 11px;
    background: #b8b8b8;
    appearance: none;
  }

  .percent {
    width: 34px;
    text-align: right;
  }

  /* taskbar */
  .taskbar {
    display: grid;
    grid-template-columns: 1fr auto 1fr;
    align-items: center;
    flex: none;
    height: 47px;
    background: linear-gradient(90deg, #1a2729 0, #1f2426 20%, #232323 30%, #1d2526 46%, #242222 56%, #162a2b 68%, #1b2527 82%, #1c2123 100%);
  }

  .weather {
    display: flex;
    gap: 4px;
    padding-left: 18px;
  }

  .weather svg,
  .dock svg {
    stroke: none;
  }

  .taskbar p {
    margin: 0;
    font-size: 11px;
  }

  .weather span {
    color: #bbb;
  }

  .dock {
    display: flex;
    align-items: center;
  }

  .app-btn {
    position: relative;
    width: 44px;
    height: 40px;
    border-radius: 4px;
  }

  .app-btn.active {
    background: #2c3636;
  }

  .app-btn.run::after {
    content: '';
    position: absolute;
    bottom: 0;
    left: 19px;
    width: 6px;
    height: 3px;
    border-radius: 2px;
    background: #9a9a9a;
  }

  .app-btn.active::after {
    left: 14px;
    width: 16px;
    background: #5bb8ea;
  }

  .find {
    display: flex;
    align-items: center;
    box-sizing: border-box;
    width: 220px;
    height: 32px;
    margin: 0 2px 0 3px;
    padding: 0 4px 0 12px;
    gap: 10px;
    border: 1px solid #4a4d4e;
    border-radius: 16px;
    background: #3a3d3f;
    font-size: 13px;
  }

  .find input {
    flex: 1;
  }

  .find .glass {
    stroke: #e8e8e8;
    stroke-width: 1.6;
  }

  .tray {
    display: flex;
    justify-content: flex-end;
    align-items: center;
    gap: 12px;
    padding-right: 19px;
  }

  .tray .up {
    margin-right: 4px;
  }

  .tray p {
    margin-left: 4px;
    text-align: right;
  }
</style>
